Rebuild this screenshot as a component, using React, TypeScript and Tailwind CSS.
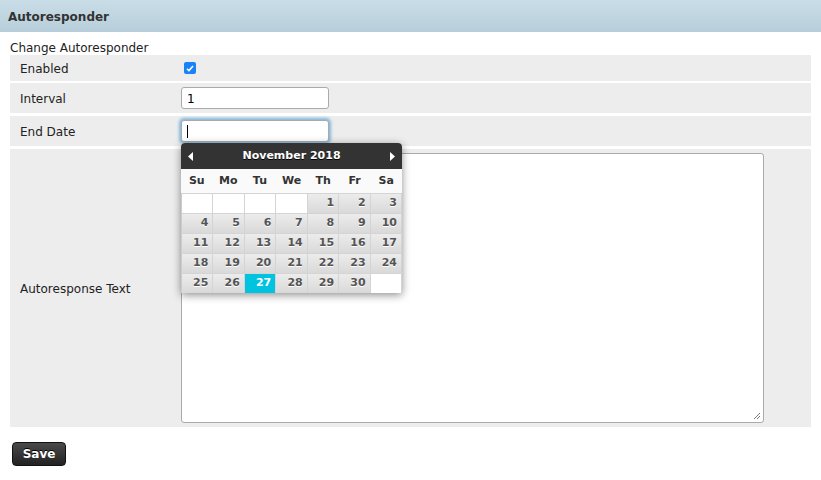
import React from "react";

const weeks: (number | null)[][] = [
  [null, null, null, null, 1, 2, 3],
  [4, 5, 6, 7, 8, 9, 10],
  [11, 12, 13, 14, 15, 16, 17],
  [18, 19, 20, 21, 22, 23, 24],
  [25, 26, 27, 28, 29, 30, null],
];
const dayNames = ["Su", "Mo", "Tu", "We", "Th", "Fr", "Sa"];

function DatePicker() {
  return (
    <div className="absolute left-0 top-[23px] z-10 w-[221px] rounded-t-[4px] bg-white shadow-[0_2px_8px_rgba(0,0,0,0.45)]">
      <div className="flex h-[26px] items-center justify-between rounded-t-[4px] bg-[#333] px-[7px] text-white">
        <svg width="6" height="9" viewBox="0 0 6 9"><path d="M5 0 L0 4.5 L5 9 Z" fill="#fff" /></svg>
        <span className="text-[11px] font-bold [text-shadow:0_1px_0_#000]">November 2018</span>
        <svg width="6" height="9" viewBox="0 0 6 9"><path d="M1 0 L6 4.5 L1 9 Z" fill="#fff" /></svg>
      </div>
      <div className="grid h-[24px] grid-cols-7 items-center bg-[#fafafa] text-center text-[11px] font-bold text-[#333]">
        {dayNames.map((d) => (
          <span key={d}>{d}</span>
        ))}
      </div>
      <div className="border-l border-[#ccc]">
        {weeks.map((w, i) => (
          <div key={i} className="grid grid-cols-7">
            {w.map((d, j) =>
              d === null ? (
                <div key={j} className="h-[20px] border-r border-t border-[#d4d4d4] bg-white" />
              ) : d === 27 ? (
                <div key={j} className="flex h-[20px] items-center justify-end border-r border-t border-[#d4d4d4] bg-[#00c3e0] pr-[4px] text-[11px] font-bold text-white">
                  {d}
                </div>
              ) : (
                <div key={j} className="flex h-[20px] items-center justify-end border-r border-t border-[#d4d4d4] bg-gradient-to-b from-[#ececec] to-[#d9d9d9] pr-[4px] text-[11px] font-bold text-[#555] [text-shadow:0_1px_0_#fff]">
                  {d}
                </div>
              )
            )}
          </div>
        ))}
      </div>
    </div>
  );
}

export default function App() {
  const row = "flex bg-[#ededed] text-[12px] text-[#222]";
  const label = "w-[171px] shrink-0 pl-[10px] pt-[2px]";
  const input = "h-[22px] w-[148px] rounded-[3px] border border-[#aaa] bg-white px-[5px] text-[12px] text-black outline-none";
  return (
    <div className="h-[480px] w-[821px] bg-white font-['DejaVu_Sans',sans-serif]">
      <div className="flex h-[32px] items-center bg-gradient-to-b from-[#c9dde7] to-[#b7ceda] pl-[8px] pt-[1px] text-[12px] font-bold text-[#333]">
        Autoresponder
      </div>
      <div className="px-[10px]">
        <div className="mt-[9px] pt-[1px] text-[12px] leading-[13px] text-[#222]">Change Autoresponder</div>
        <div className={`${row} h-[26px] items-center`}>
          <div className={label}>Enabled</div>
          <div className="flex pl-[3px]">
            <span className="flex h-[12px] w-[12px] items-center justify-center rounded-[2px] bg-[#1a82f7]">
              <svg width="8" height="7" viewBox="0 0 8 7"><path d="M1 3.8 L3 5.6 L7 1" stroke="#fff" strokeWidth="1.6" fill="none" /></svg>
            </span>
          </div>
        </div>
        <div className={`${row} mt-[2px] h-[30px] items-center`}>
          <div className={label}>Interval</div>
          <div className={`${input} flex items-center pt-[1px]`}>1</div>
        </div>
        <div className={`${row} mt-[3px] h-[30px] items-center`}>
          <div className={label}>End Date</div>
          <div className="relative">
            <div className={`${input} flex items-center border-[#5a9ac0] shadow-[0_0_3px_2px_rgba(60,150,210,0.6)]`}>
              <span className="h-[13px] w-px bg-black" />
            </div>
            <DatePicker />
          </div>
        </div>
        <div className={`${row} mt-[3px] h-[278px] items-center`}>
          <div className={label}>Autoresponse Text</div>
          <div className="relative h-[270px] w-[583px] rounded-[3px] border border-[#aaa] bg-white">
            <svg className="absolute bottom-[2px] right-[2px]" width="8" height="8" viewBox="0 0 8 8">
              <path d="M1 7 L7 1 M4 7 L7 4" stroke="#777" strokeWidth="1" />
            </svg>
          </div>
        </div>
        <button className="ml-[2px] mt-[15px] flex h-[24px] w-[54px] items-center justify-center rounded-[4px] border border-[#111] bg-gradient-to-b from-[#4a4a4a] to-[#222] text-[12px] font-bold text-white [text-shadow:0_-1px_0_#000]">
          Save
        </button>
      </div>
    </div>
  );
}
